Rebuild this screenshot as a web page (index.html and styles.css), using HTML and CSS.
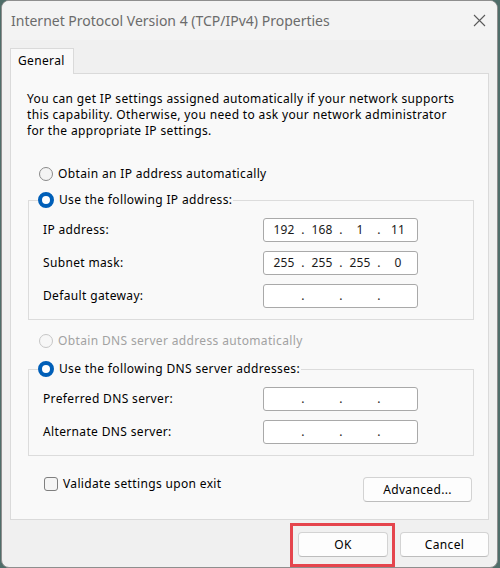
FILE: index.html
```html
<!DOCTYPE html>
<html>
<head>
<meta charset="utf-8">
<link rel="stylesheet" href="styles.css">
</head>
<body>
<div class="window">
  <div class="titlebar">
    <span class="title">Internet Protocol Version 4 (TCP/IPv4) Properties</span>
    <svg class="close" width="13" height="13" viewBox="0 0 13 13"><path d="M1 1L12 12M12 1L1 12" stroke="#5a5a5a" stroke-width="1.1" fill="none"/></svg>
  </div>
  <div class="content">
    <div class="tabs"><div class="tab">General</div></div>
    <div class="panel">
      <p class="intro">You can get IP settings assigned automatically if your network supports<br>this capability. Otherwise, you need to ask your network administrator<br>for the appropriate IP settings.</p>

      <div class="option first"><span class="radio"></span>Obtain an IP address automatically</div>

      <fieldset class="group">
        <legend><span class="option"><span class="radio checked"></span>Use the following IP address:</span></legend>
        <div class="field"><span class="label">IP address:</span>
          <div class="ip"><span class="seg">192</span><span class="dot">.</span><span class="seg">168</span><span class="dot">.</span><span class="seg">1</span><span class="dot">.</span><span class="seg">11</span></div>
        </div>
        <div class="field"><span class="label">Subnet mask:</span>
          <div class="ip"><span class="seg">255</span><span class="dot">.</span><span class="seg">255</span><span class="dot">.</span><span class="seg">255</span><span class="dot">.</span><span class="seg">0</span></div>
        </div>
        <div class="field"><span class="label">Default gateway:</span>
          <div class="ip"><span class="seg"></span><span class="dot">.</span><span class="seg"></span><span class="dot">.</span><span class="seg"></span><span class="dot">.</span><span class="seg"></span></div>
        </div>
      </fieldset>

      <div class="option dns-auto disabled"><span class="radio"></span>Obtain DNS server address automatically</div>

      <fieldset class="group dns">
        <legend><span class="option"><span class="radio checked"></span>Use the following DNS server addresses:</span></legend>
        <div class="field"><span class="label">Preferred DNS server:</span>
          <div class="ip"><span class="seg"></span><span class="dot">.</span><span class="seg"></span><span class="dot">.</span><span class="seg"></span><span class="dot">.</span><span class="seg"></span></div>
        </div>
        <div class="field"><span class="label">Alternate DNS server:</span>
          <div class="ip"><span class="seg"></span><span class="dot">.</span><span class="seg"></span><span class="dot">.</span><span class="seg"></span><span class="dot">.</span><span class="seg"></span></div>
        </div>
      </fieldset>

      <div class="bottom-row">
        <div class="check-option"><span class="checkbox"></span>Validate settings upon exit</div>
        <button class="btn advanced">Advanced...</button>
      </div>
    </div>
    <div class="actions">
      <div class="ok-wrap"><button class="btn ok">OK</button></div>
      <button class="btn cancel">Cancel</button>
    </div>
  </div>
</div>
</body>
</html>
```

FILE: styles.css
```css
* { box-sizing: border-box; }
html, body { margin: 0; height: 100%; }
body {
  background: #4f6d69;
  font-family: "Noto Sans", "Open Sans", sans-serif;
  font-size: 12px;
  color: #000;
  overflow: hidden;
}
.window {
  margin-left: 1px;
  width: 497px;
  height: 568px;
  background: #f0f0f0;
  border: 1px solid #8e8e8e;
  border-radius: 8px;
  overflow: hidden;
}
.titlebar {
  height: 39px;
  display: flex;
  align-items: center;
  justify-content: space-between;
  padding: 0 11px 0 9px;
  background: #f3f3f3;
}
.title { font-size: 14px; color: #6b6b6b; }
.content { padding: 8px 0 0 8px; letter-spacing: 0.35px; }
.tabs { display: flex; }
.tab {
  position: relative;
  width: 64px;
  height: 26px;
  margin-bottom: -1px;
  padding: 4px 0 0 7px;
  line-height: 16px;
  background: #f9f9f9;
  border: 1px solid #dadada;
  border-bottom: none;
}
.panel {
  width: 479px;
  background: #f9f9f9;
  border: 1px solid #dadada;
  padding: 17px 16px 17px 16px;
}
.intro { margin: 0; line-height: 16px; }
.option {
  display: flex;
  align-items: center;
  gap: 5px;
  height: 16px;
  line-height: 16px;
  white-space: nowrap;
}
.option.first { margin: 27px 0 0 12px; }
.option.dns-auto { margin: 13px 0 0 12px; }
.option.disabled { color: #a2a2a2; }
.radio {
  width: 14px;
  height: 14px;
  border-radius: 50%;
  border: 1px solid #8a8a8a;
  background: #f4f4f4;
  flex: none;
}
.option.disabled .radio { border-color: #c6c6c6; background: #f7f7f7; }
.radio.checked {
  border: 4px solid #005fb8;
  background: #fff;
  width: 16px;
  height: 16px;
  margin-left: -1px;
}
.group {
  margin: 10px 0 0 1px;
  width: 446px;
  padding: 5px 0 7px 0;
  border: 1px solid #dcdcdc;
  min-width: 0;
}
.group.dns { margin-top: 12px; }
.group legend {
  margin-left: 9px;
  padding: 0 1px;
  height: 16px;
}
.field {
  display: flex;
  align-items: center;
  height: 33px;
  padding-left: 14px;
}
.label { flex: 1; }
.ip {
  width: 155px;
  height: 24px;
  margin-right: 55px;
  display: flex;
  align-items: center;
  padding-left: 6px;
  background: #fff;
  border: 1px solid #a9a9a9;
  border-radius: 3px;
  color: #1a1a1a;
  letter-spacing: 0.2px;
}
.seg { width: 28px; text-align: center; }
.dot { width: 10px; text-align: center; }
.bottom-row {
  margin-top: 20px;
  display: flex;
  align-items: flex-start;
  justify-content: space-between;
  padding-left: 17px;
}
.check-option {
  display: flex;
  align-items: center;
  gap: 5px;
  height: 16px;
  line-height: 16px;
}
.checkbox {
  width: 14px;
  height: 14px;
  border: 1px solid #7f7f7f;
  border-radius: 3px;
  background: #f5f5f5;
}
.btn {
  height: 25px;
  padding: 0;
  font-family: inherit;
  font-size: 12px;
  letter-spacing: 0.35px;
  color: #000;
  background: #fdfdfd;
  border: 1px solid #d3d3d3;
  border-bottom-color: #bdbdbd;
  border-radius: 4px;
}
.advanced { width: 109px; margin-top: 1px; }
.actions {
  width: 479px;
  margin-top: 12px;
  display: flex;
  justify-content: flex-end;
  gap: 12px;
}
.ok-wrap { position: relative; display: flex; }
.ok-wrap::after {
  content: "";
  position: absolute;
  left: -8px;
  right: -7px;
  top: -9px;
  bottom: -10px;
  border: 3px solid #e5454d;
}
.ok { width: 90px; }
.cancel { width: 89px; }
```
